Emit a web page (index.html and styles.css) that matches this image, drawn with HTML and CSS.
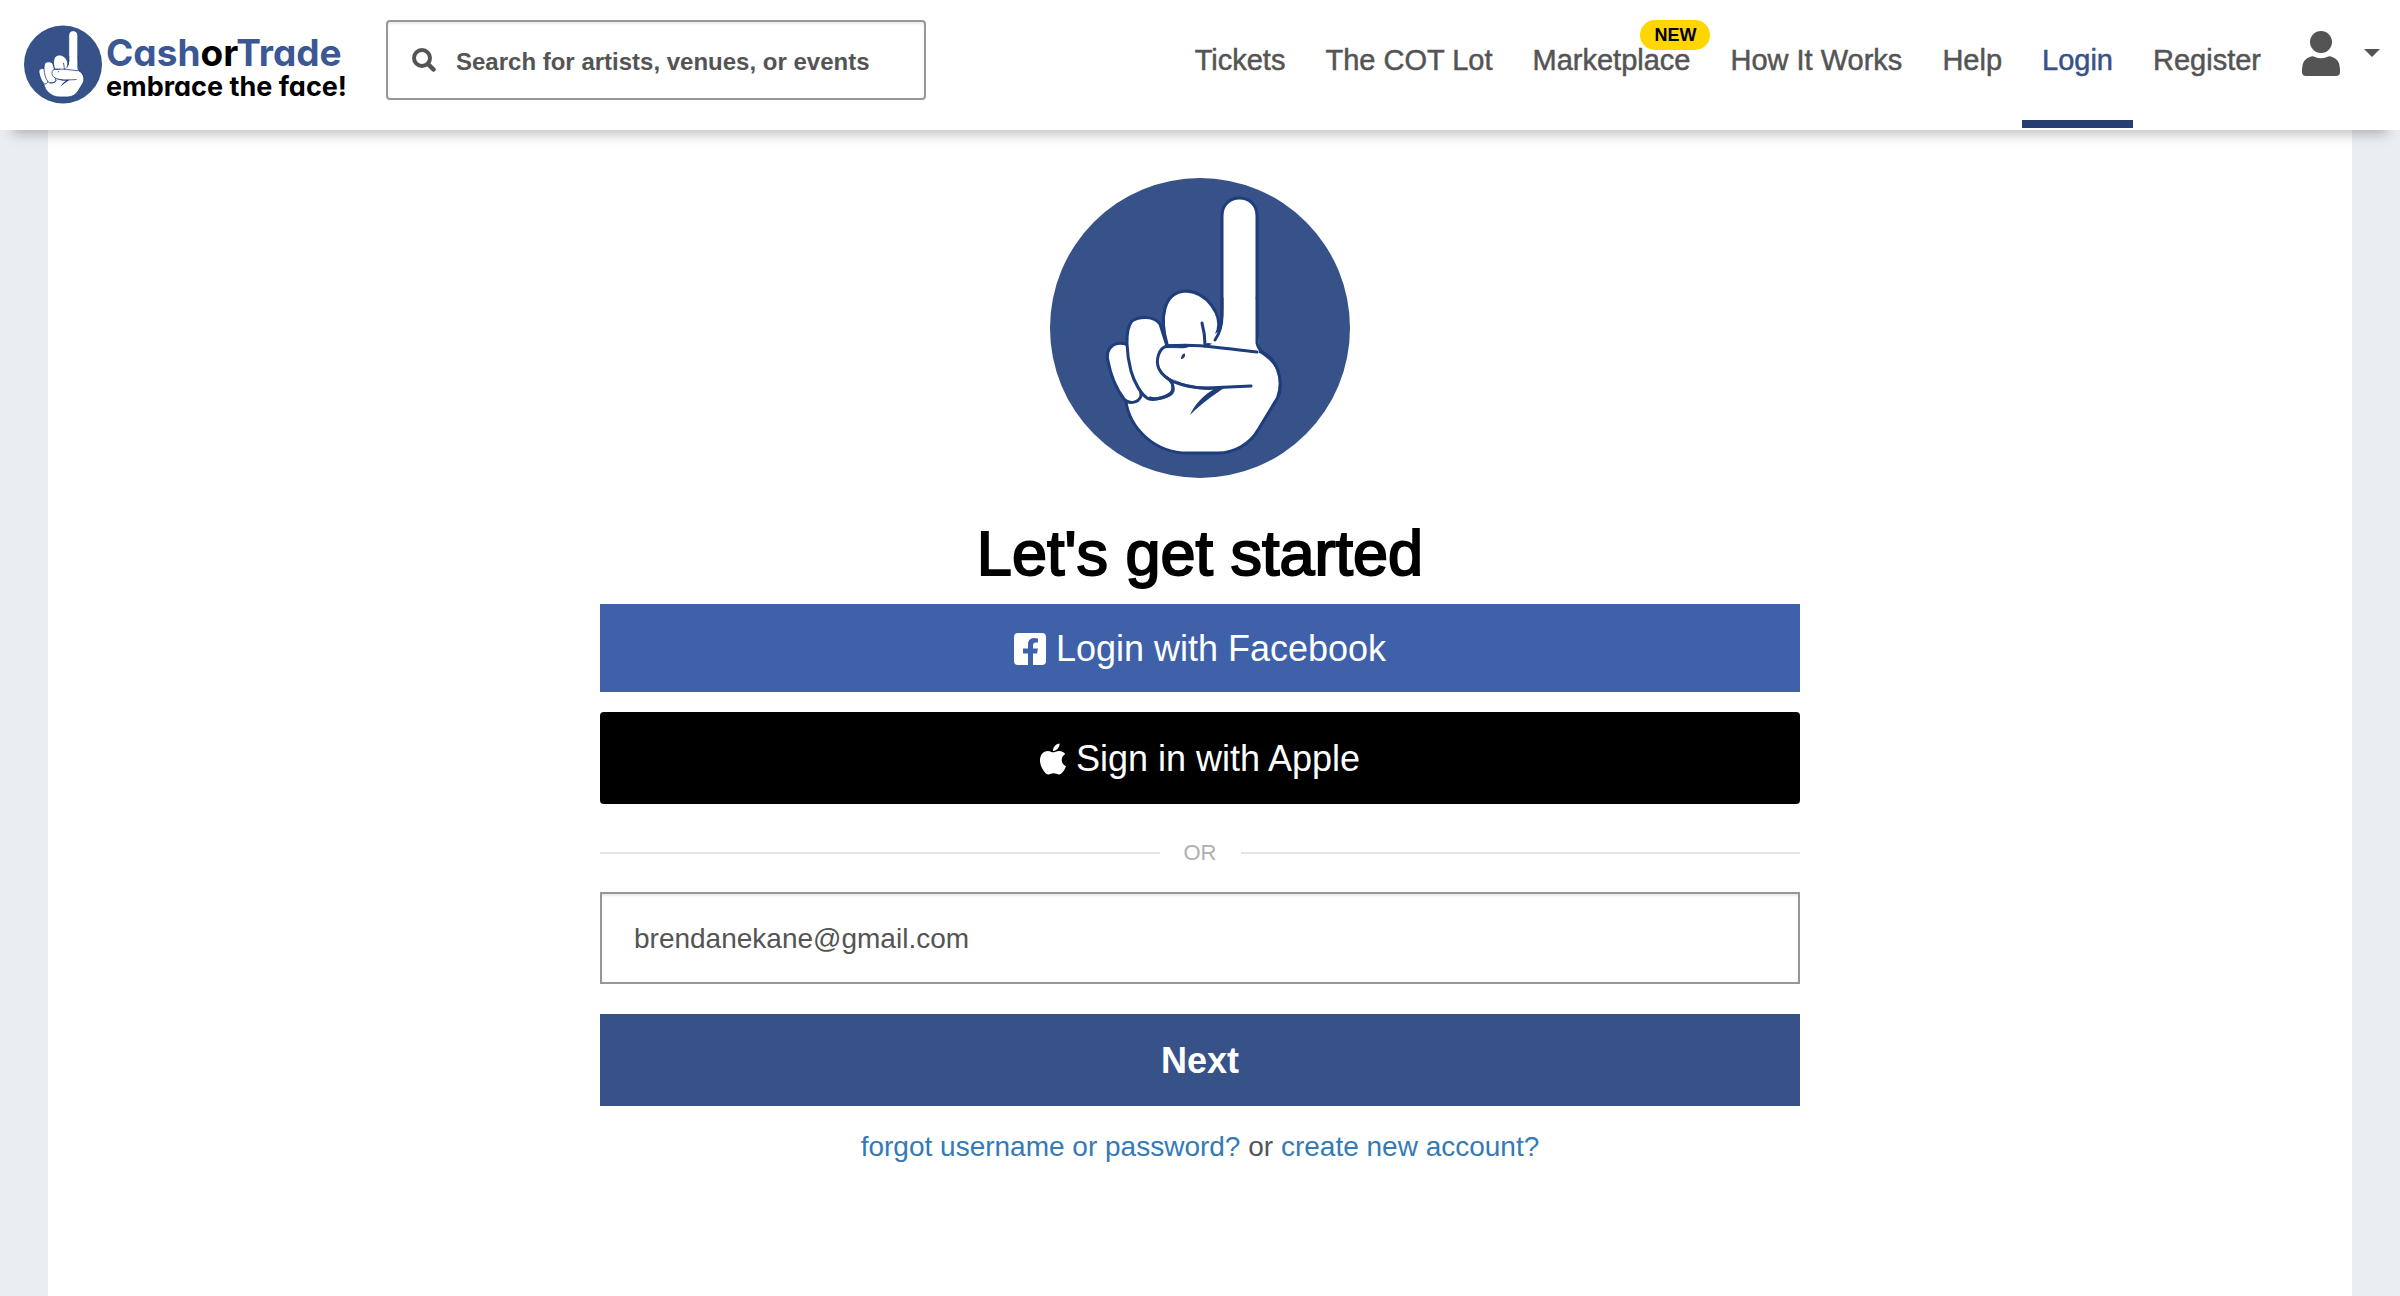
FILE: index.html
```
<!DOCTYPE html>
<html lang="en">
<head>
<meta charset="utf-8">
<meta name="viewport" content="width=device-width, initial-scale=1">
<title>Login - CashorTrade</title>
<link rel="stylesheet" href="styles.css">
</head>
<body>
<svg class="defs" aria-hidden="true">
  <symbol id="hand" viewBox="0 0 300 300">
    <circle cx="150" cy="150" r="150" fill="#375189"/>
    <g fill="#fff" stroke="#1f3c7c" stroke-width="3" stroke-linejoin="round" stroke-linecap="round">
      <path d="M76 224 C80 250 104 275 138 275 L168 275 C184 275 200 266 208 252 L228 219 C234 205 228 181 207 174 L207 38 C207 14 172 14 172 38 L172 130 C172 146 170 152 164 160 L130 170 L80 210 Z"/>
      <path d="M117 166 C110 142 112 114 136 113 C158 114 172 138 168 152 L164 163 L155 168"/>
      <path d="M76 166 C63 163 55 171 58 183 C61 199 68 213 74 221 C78 226 88 226 91 218 L88 180 Z"/>
      <path d="M110 146 C104 138 90 138 82 143 C74 152 77 178 81 193 C84 204 91 216 97 220 C102 224 124 218 123 210 L122 200 L117 168 Z"/>
      <path stroke="none" d="M154 164 L173 150 L206 120 L209 176 Z"/>
      <path stroke="none" d="M118 204 L112 170 L200 171 C228 180 235 205 228 217 L190 225 L140 225 Z"/>
      <path fill="none" d="M207 120 L207 165 Q208 170 212 174 C226 180 234 200 228 218"/>
      <path fill="none" d="M172 120 L172 138 Q172 152 165 162"/>
      <path fill="none" d="M207 174 C175 171 150 165 117 168 C109 170 105 182 109 191 C114 201 130 210 157 210 L201 208"/>
      <path fill="none" d="M117 200 Q124 204 123 213 C121 219 107 222 100 220"/>
      <path fill="none" d="M152 145 Q155 156 155 167"/>
    </g>
    <path fill="#1f3c7c" d="M140 237 C144 227 155 215 168 209 L174 210 C161 219 151 226 140 237 Z M131 181 C131 176 136 173 135 178 Q134 181 131 181 Z M123 201 C138 209 160 210 180 208 L160 212 C143 212 132 208 123 201 Z"/>
  </symbol>
</svg>

<header class="header">
  <a class="brand" href="#" aria-label="CashorTrade, embrace the face!">
    <svg class="brand-mark" aria-hidden="true"><use href="#hand"/></svg>
    <span class="brand-text">
      <span class="brand-name">Cash<span class="brand-or">or</span>Trade</span>
      <span class="brand-tag">embrace the face!</span>
    </span>
  </a>
  <form class="search" role="search">
    <svg class="search-icon" viewBox="0 0 24 24" aria-hidden="true"><circle cx="10" cy="10" r="8" fill="none" stroke="currentColor" stroke-width="4"/><path d="M16 16l5.500 5.500" stroke="currentColor" stroke-width="4.500" stroke-linecap="round"/></svg>
    <input class="search-input" type="search" aria-label="Search" placeholder="Search for artists, venues, or events">
  </form>
  <nav class="nav" aria-label="Main">
    <a class="nav-link" href="#">Tickets</a>
    <a class="nav-link" href="#">The COT Lot</a>
    <a class="nav-link" href="#">Marketplace<span class="badge">NEW</span></a>
    <a class="nav-link" href="#">How It Works</a>
    <a class="nav-link" href="#">Help</a>
    <a class="nav-link nav-link-active" href="#" aria-current="page">Login</a>
    <a class="nav-link" href="#">Register</a>
  </nav>
  <button class="account" type="button" aria-label="Account menu">
    <svg class="account-icon" viewBox="0 0 38 46" aria-hidden="true"><circle cx="19" cy="11" r="11" fill="currentColor"/><path fill="currentColor" d="M9 25.500 Q11 25 13 26 Q19 28.500 25 26 Q27 25 29 25.500 Q38 28 38 38 V41 Q38 45 34 45 H4 Q0 45 0 41 V38 Q0 28 9 25.500Z"/></svg>
    <svg class="caret" viewBox="0 0 16 8" aria-hidden="true"><path fill="currentColor" d="M0 0H16L8 8Z"/></svg>
  </button>
</header>

<main class="page">
  <section class="login">
    <svg class="login-mark" aria-hidden="true"><use href="#hand"/></svg>
    <h1 class="title">Let's get started</h1>
    <button class="btn btn-facebook" type="button">
      <svg class="icon-facebook" viewBox="0 0 32 32" aria-hidden="true"><path fill="currentColor" d="M4 0H28Q32 0 32 4V28Q32 32 28 32H19V20.500H23L24 15.500H19V12Q19 9.500 22 9.500H24V5.500Q22 5 20 5Q14 5 14 11.500V15.500H9V20.500H14V32H4Q0 32 0 28V4Q0 0 4 0Z"/></svg>
      Login with Facebook
    </button>
    <button class="btn btn-apple" type="button">
      <svg class="icon-apple" viewBox="4 32 376 448" aria-hidden="true"><path fill="currentColor" d="M318.700 268.700c-.2-36.700 16.400-64.400 50-84.800-18.800-26.900-47.200-41.700-84.700-44.600-35.500-2.800-74.300 20.700-88.500 20.700-15 0-49.400-19.700-76.400-19.700C63.300 141.200 4 184.800 4 273.500q0 39.300 14.400 81.200c12.800 36.700 59 126.700 107.200 125.200 25.200-.6 43-17.900 75.800-17.900 31.800 0 48.300 17.900 76.400 17.900 48.600-.7 90.400-82.500 102.600-119.300-65.200-30.700-61.700-90-61.700-91.900zm-56.600-164.200c27.300-32.400 24.800-61.900 24-72.500-24.100 1.400-52 16.400-67.900 34.900-17.500 19.800-27.800 44.300-25.600 71.900 26.100 2 49.900-11.400 69.500-34.300z"/></svg>
      Sign in with Apple
    </button>
    <div class="divider">OR</div>
    <form class="login-form">
      <input class="field" type="email" aria-label="Email or username" value="brendanekane@gmail.com">
      <button class="btn btn-next" type="button">Next</button>
    </form>
    <p class="help"><a class="help-link" href="#">forgot username or password?</a> or <a class="help-link" href="#">create new account?</a></p>
  </section>
</main>
</body>
</html>
```
FILE: styles.css
```
* {
  box-sizing: border-box;
}

body {
  margin: 0;
  min-height: 100vh;
  display: flex;
  flex-direction: column;
  background: #eaeef3;
  color: #545454;
  font: 28px/40px "Liberation Sans", Arial, sans-serif;
}

a {
  color: inherit;
  text-decoration: none;
}

button,
input {
  font: inherit;
  color: inherit;
}

.defs {
  position: absolute;
  width: 0;
  height: 0;
}

.header {
  position: relative;
  z-index: 1;
  display: flex;
  align-items: flex-start;
  height: 130px;
  padding: 20px 20px 0 24px;
  background: #fff;
  box-shadow: 0 16px 12px -12px rgba(0, 0, 0, 0.26);
}

.brand {
  display: flex;
  align-items: flex-start;
  gap: 4px;
  width: 362px;
  padding-top: 5px;
}

.brand-mark {
  flex: none;
  width: 78px;
  height: 79px;
}

.brand-text {
  display: flex;
  flex-direction: column;
  padding-top: 7px;
  font-family: Inter, "Liberation Sans", sans-serif;
  font-weight: 700;
  font-feature-settings: "cv11";
  white-space: nowrap;
}

.brand-name {
  color: #3b5794;
  font-size: 37px;
  line-height: 42px;
}

.brand-or,
.brand-tag {
  color: #000;
}

.brand-tag {
  font-size: 27px;
  line-height: 26px;
}

.search {
  display: flex;
  align-items: center;
  width: 540px;
  height: 80px;
  padding: 0 24px;
  gap: 20px;
  border: 2px solid #979797;
  border-radius: 4px;
  box-shadow: inset 0 2px 2px rgba(0, 0, 0, 0.08);
}

.search-icon {
  flex: none;
  width: 24px;
  height: 24px;
}

.search-input {
  flex: 1;
  min-width: 0;
  padding: 4px 0 0;
  border: 0;
  outline: 0;
  background: none;
  font-size: 24px;
  font-weight: 700;
}

.search-input::placeholder {
  color: #545454;
  opacity: 1;
}

.nav {
  display: flex;
  margin-left: auto;
}

.nav-link {
  position: relative;
  height: 108px;
  padding: 20px 20px 0;
  font-size: 29px;
  white-space: nowrap;
  -webkit-text-stroke: 0.5px currentColor;
}

.nav-link-active {
  border-bottom: 8px solid #263e72;
  color: #375189;
}

.badge {
  position: absolute;
  top: 0;
  right: 0;
  height: 30px;
  padding: 0 14px;
  border-radius: 15px;
  background: #ffd600;
  color: #000;
  font-size: 18px;
  font-weight: 700;
  line-height: 30px;
  -webkit-text-stroke: 0;
}

.account {
  display: flex;
  align-items: flex-start;
  gap: 24px;
  margin-left: 21px;
  padding: 11px 0 0;
  border: 0;
  background: none;
}

.account-icon {
  width: 38px;
  height: 46px;
}

.caret {
  width: 16px;
  height: 8px;
  margin-top: 18px;
}

.page {
  flex: 1;
  margin: 0 48px;
  padding: 48px 24px;
  background: #fff;
}

.login {
  display: flex;
  flex-direction: column;
  max-width: 1200px;
  margin: 0 auto;
}

.login-mark {
  align-self: center;
  width: 300px;
  height: 300px;
}

.title {
  margin: 39px 0 15px;
  color: #000;
  font-size: 63px;
  font-weight: 400;
  line-height: 72px;
  text-align: center;
  -webkit-text-stroke: 2px #000;
}

.btn {
  display: flex;
  align-items: center;
  justify-content: center;
  gap: 10px;
  width: 100%;
  height: 92px;
  padding: 2px 0 0;
  border: 0;
  color: #fff;
  font-size: 36px;
}

.btn-facebook {
  height: 88px;
  margin-bottom: 20px;
  background: #3e61a9;
}

.btn-apple {
  border-radius: 4px;
  background: #000;
}

.btn-next {
  background: #375189;
  font-weight: 700;
}

.icon-facebook {
  width: 32px;
  height: 32px;
}

.icon-apple {
  width: 26px;
  height: 32px;
}

.divider {
  display: flex;
  align-items: center;
  gap: 24px;
  margin: 29px 0 19px;
  color: #b0b0b0;
  font-size: 22px;
}

.divider::before,
.divider::after {
  content: "";
  flex: 1;
  height: 2px;
  background: #e4e4e4;
}

.login-form {
  display: flex;
  flex-direction: column;
  gap: 30px;
}

.field {
  width: 100%;
  height: 92px;
  padding: 2px 32px 0;
  border: 2px solid #979797;
  border-radius: 0;
  background: #fff;
  box-shadow: inset 0 2px 2px rgba(0, 0, 0, 0.08);
}

.help {
  margin: 21px 0 0;
  text-align: center;
}

.help-link {
  color: #337ab7;
}
```
